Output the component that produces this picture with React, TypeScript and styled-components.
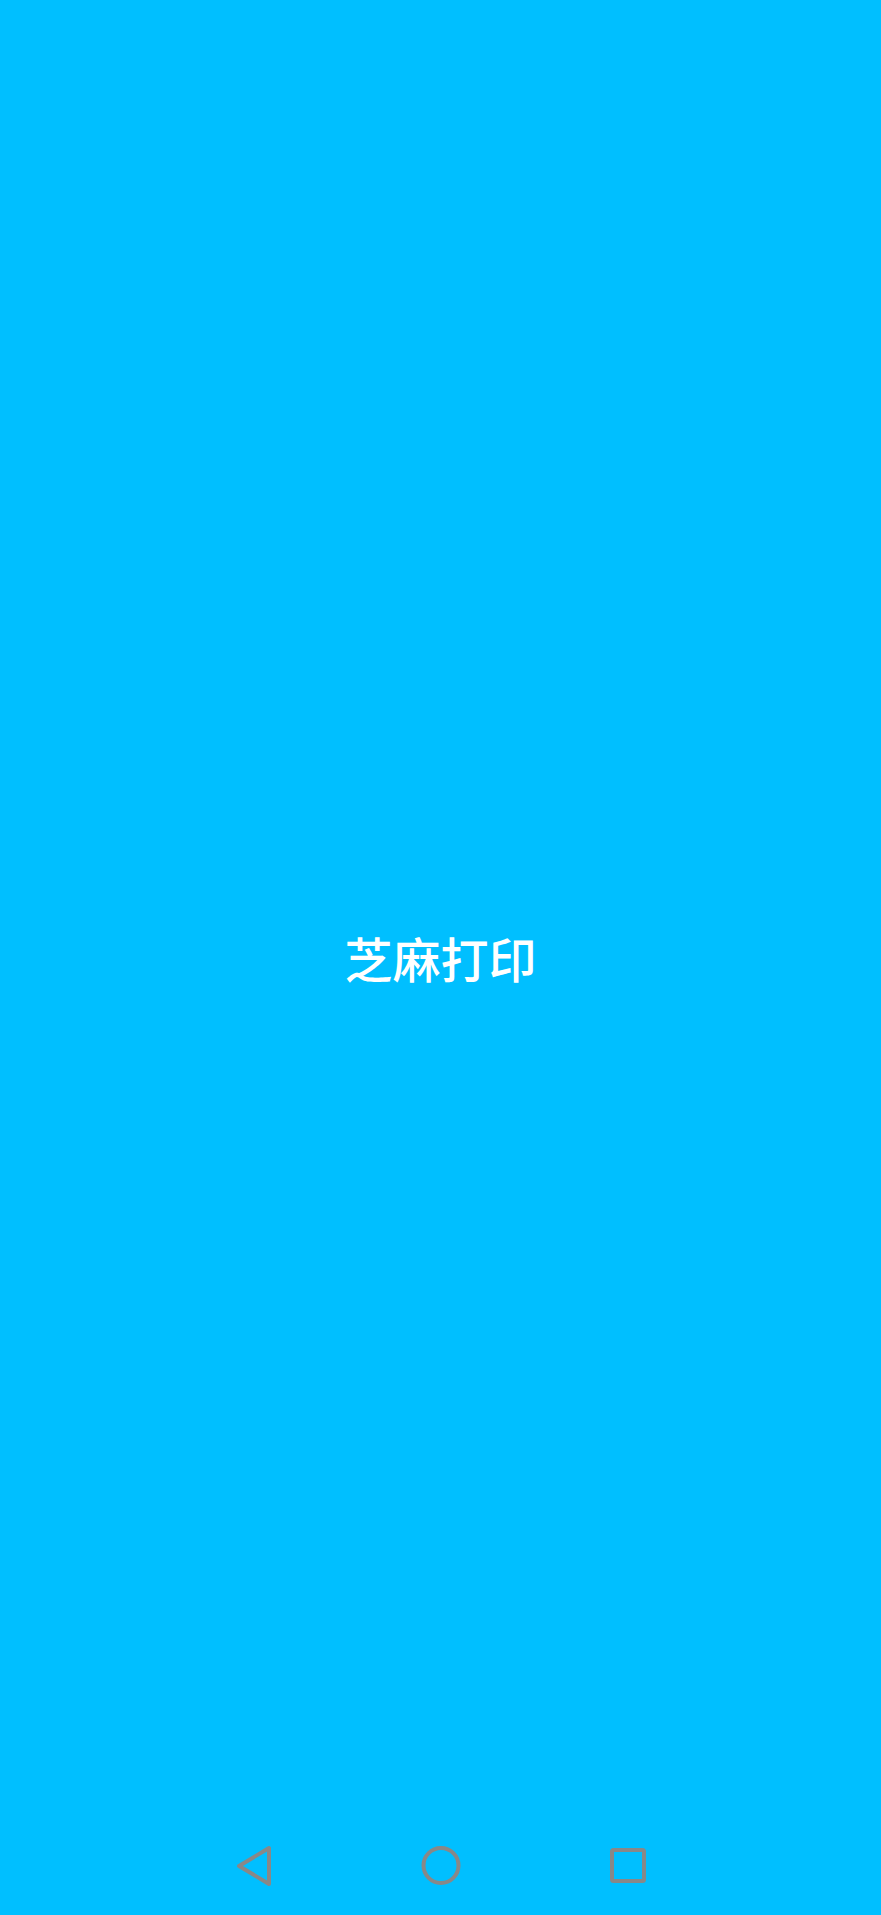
import React from "react";
import styled, { createGlobalStyle } from "styled-components";

const Global = createGlobalStyle`
  html, body { margin: 0; padding: 0; }
  body { background: #00bfff; font-family: "Noto Sans CJK SC", "Noto Sans", sans-serif; }
`;

const Screen = styled.div`
  position: relative;
  width: 881px;
  height: 1915px;
  background: #00bfff;
  display: flex;
  align-items: center;
  justify-content: center;
  overflow: hidden;
`;

const Title = styled.h1`
  margin: 0;
  color: #ffffff;
  font-family: "Noto Sans CJK SC", "Noto Sans", sans-serif;
  font-weight: 500;
  font-size: 48px;
  line-height: 1;
  letter-spacing: 0px;
  transform: translateY(-1px);
`;

const NavBar = styled.nav`
  position: absolute;
  left: 0;
  right: 0;
  bottom: 0;
  height: 100px;
  display: flex;
  justify-content: center;
  align-items: center;
`;

const NavButton = styled.button`
  width: 187px;
  height: 100px;
  border: none;
  background: transparent;
  padding: 0;
  display: flex;
  align-items: center;
  justify-content: center;
  color: #888888;
`;

export default function App() {
  return (
    <>
      <Global />
      <Screen>
        <Title>芝麻打印</Title>
        <NavBar>
          <NavButton aria-label="back">
            <svg width="44" height="44" viewBox="0 0 44 44">
              <path
                d="M7 23 L37 5 L37 41 Z"
                fill="none"
                stroke="currentColor"
                strokeWidth="4"
                strokeLinejoin="round"
              />
            </svg>
          </NavButton>
          <NavButton aria-label="home">
            <svg width="44" height="44" viewBox="0 0 44 44">
              <circle cx="22" cy="22.5" r="17.5" fill="none" stroke="currentColor" strokeWidth="4" />
            </svg>
          </NavButton>
          <NavButton aria-label="recents">
            <svg width="44" height="44" viewBox="0 0 44 44">
              <rect x="6" y="7" width="32" height="31" rx="1.5" fill="none" stroke="currentColor" strokeWidth="4" />
            </svg>
          </NavButton>
        </NavBar>
      </Screen>
    </>
  );
}
